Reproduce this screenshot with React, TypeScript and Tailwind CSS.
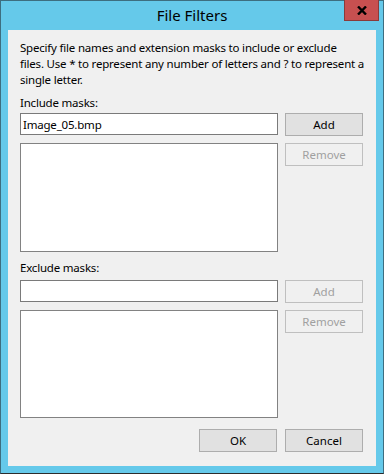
import React from 'react'

const font = { fontFamily: '"Segoe UI", "Noto Sans", "Open Sans", sans-serif' }

const Button = ({ label, disabled = false }: { label: string; disabled?: boolean }) => (
  <button
    disabled={disabled}
    className={
      disabled
        ? 'h-[23px] w-[78px] shrink-0 border border-[#bfbfbf] bg-[#f0f0f0] text-[11.5px] text-[#a0a0a0]'
        : 'h-[23px] w-[78px] shrink-0 border border-[#adadad] bg-[#e1e1e1] text-[11.5px] text-black'
    }>
    {label}
  </button>
)

const MaskSection = ({
  label,
  value,
  addDisabled,
  labelTop,
  inputTop,
  listHeight
}: {
  label: string
  value: string
  addDisabled: boolean
  labelTop: string
  inputTop: string
  listHeight: string
}) => (
  <>
    <div className={`${labelTop} h-[16px] text-[11.5px] leading-[16px] tracking-[-0.2px] text-black`}>
      {label}
    </div>
    <div className={`${inputTop} flex items-start gap-[7px]`}>
      <input
        readOnly
        value={value}
        className="h-[22px] w-[258px] border border-[#7a7a7a] bg-white px-[2px] text-[11.5px] tracking-[-0.2px] text-black outline-none"
        style={font}
      />
      <Button label="Add" disabled={addDisabled} />
    </div>
    <div className="mt-[7px] flex items-start gap-[7px]">
      <div className={`${listHeight} w-[258px] border border-[#828282] bg-white`}></div>
      <Button label="Remove" disabled />
    </div>
  </>
)

export default function App() {
  return (
    <div
      className="flex h-[474px] w-[384px] flex-col border border-[#3d6e80] border-b-[#2c2c2c] bg-[#65c9ea]"
      style={font}>
      {/* title bar */}
      <div className="relative flex h-[29px] shrink-0 items-center justify-center">
        <span className="text-[15px] leading-none text-black">File Filters</span>
        <button className="absolute right-[4px] top-[-1px] flex h-[21px] w-[35px] items-center justify-center border border-[#8a3a3a] border-t-0 bg-[#c75050]">
          <svg width="10" height="9" viewBox="0 0 10 9">
            <path d="M1 0.5 L9 8.5 M9 0.5 L1 8.5" stroke="#000" strokeWidth="2.4" />
          </svg>
        </button>
      </div>

      {/* client area */}
      <div className="mx-[7px] mb-[7px] flex flex-1 flex-col bg-[#f0f0f0] pl-[12px] pr-[13px]">
        <p className="mt-[10px] whitespace-nowrap text-[11.5px] leading-[16px] tracking-[-0.2px] text-black">
          Specify file names and extension masks to include or exclude
          <br />
          files. Use * to represent any number of letters and ? to represent a
          <br />
          single letter.
        </p>

        <MaskSection
          label="Include masks:"
          value="Image_05.bmp"
          addDisabled={false}
          labelTop="mt-[7px]"
          inputTop="mt-[2px]"
          listHeight="h-[109px]"
        />

        <MaskSection
          label="Exclude masks:"
          value=""
          addDisabled
          labelTop="mt-[8px]"
          inputTop="mt-[4px]"
          listHeight="h-[108px]"
        />

        <div className="mt-[11px] flex justify-end gap-[8px]">
          <Button label="OK" />
          <Button label="Cancel" />
        </div>
      </div>
    </div>
  )
}
